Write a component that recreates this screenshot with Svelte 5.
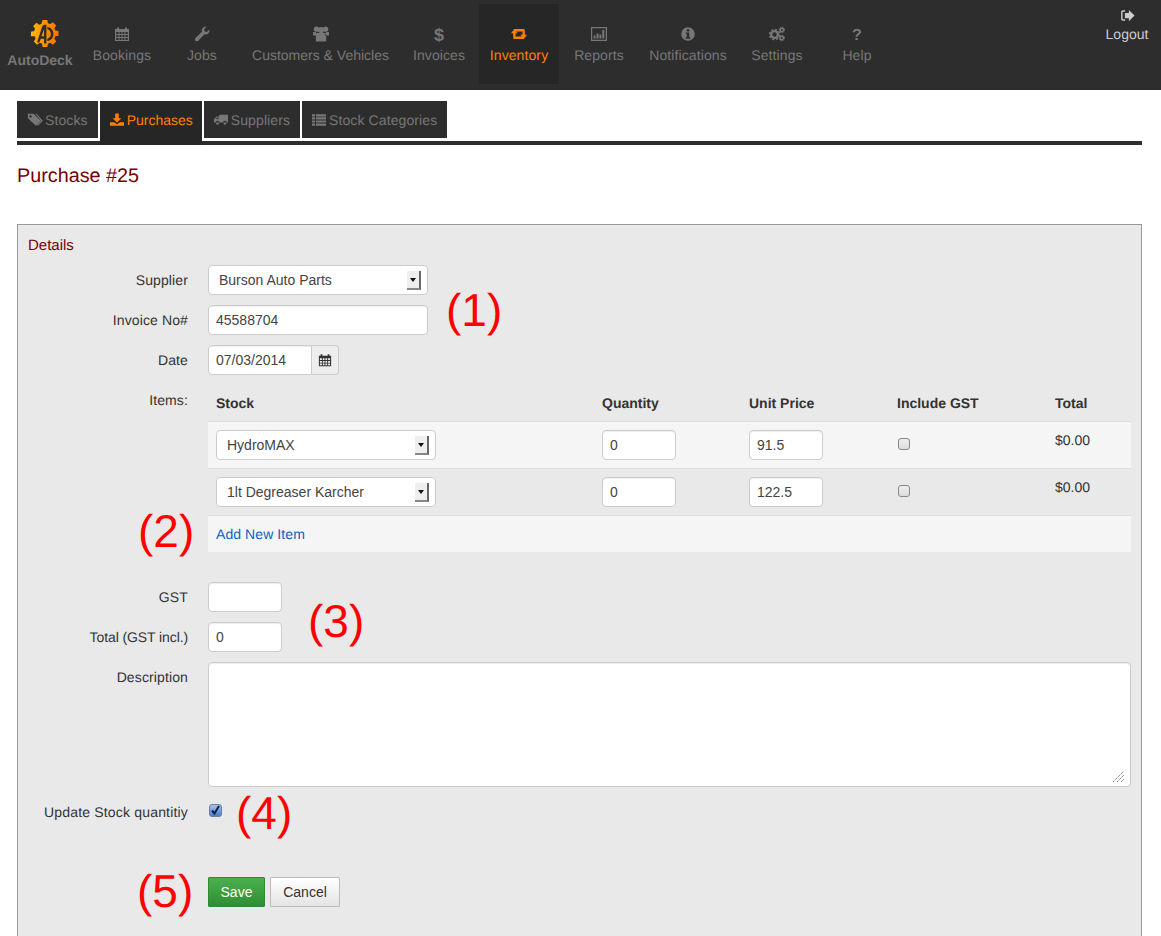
<script>
	const nav = [
		{ label: 'Bookings', icon: 'calendar' },
		{ label: 'Jobs', icon: 'wrench' },
		{ label: 'Customers & Vehicles', icon: 'users' },
		{ label: 'Invoices', icon: 'dollar' },
		{ label: 'Inventory', icon: 'retweet', active: true },
		{ label: 'Reports', icon: 'chart' },
		{ label: 'Notifications', icon: 'info' },
		{ label: 'Settings', icon: 'cogs' },
		{ label: 'Help', icon: 'question' }
	];

	const tabs = [
		{ label: 'Stocks', icon: 'tag' },
		{ label: 'Purchases', icon: 'download', active: true },
		{ label: 'Suppliers', icon: 'truck' },
		{ label: 'Stock Categories', icon: 'list' }
	];

	const items = [
		{ stock: 'HydroMAX', qty: '0', price: '91.5', total: '$0.00' },
		{ stock: '1lt Degreaser Karcher', qty: '0', price: '122.5', total: '$0.00' }
	];
</script>

{#snippet icon(name)}
	{#if name === 'calendar'}
		<svg viewBox="0 0 16 16" class="ico"><path fill-rule="evenodd" d="M1 3h2V1.500h2V3h6V1.500h2V3h2v12H1zM2.200 6v2h2.300V6zm3.300 0v2h2V6zm3 0v2h2V6zm3 0v2h2.300V6zM2.200 9v2h2.300V9zm3.300 0v2h2V9zm3 0v2h2V9zm3 0v2h2.300V9zM2.200 12v2h2.300v-2zm3.300 0v2h2v-2zm3 0v2h2v-2zm3 0v2h2.300v-2z"/></svg>
	{:else if name === 'wrench'}
		<svg viewBox="0 0 16 16" class="ico"><path d="M15.400 3.600c.3 1.700-.2 3.200-1.400 4.100-1.100.8-2.400 1-3.600.6L4.300 14.700c-.8.800-2 .8-2.800 0-.8-.8-.8-2 0-2.800l6.400-6.100c-.4-1.200-.2-2.600.7-3.600C9.600 1 11.100.5 12.700.8L10.200 3.300l.5 2.100 2.100.5z"/></svg>
	{:else if name === 'users'}
		<svg viewBox="0 0 16 16" class="ico"><circle cx="3.400" cy="3.200" r="2.600"/><circle cx="12.600" cy="3.200" r="2.600"/><circle cx="8" cy="4" r="3.100"/><path d="M0 6h3l1 3.500H0zM16 6h-3l-1 3.500h4zM3.800 7h8.400l1 2V15.500H2.800V9z"/></svg>
	{:else if name === 'dollar'}
		<span class="glyph">$</span>
	{:else if name === 'retweet'}
		<svg viewBox="0 0 16 16" class="ico"><path d="M0 7.200 3.300 3l3.300 4.200H4.500v3.400H11l2 2.400H3.400a1.200 1.200 0 0 1-1.200-1.200V7.200zM16 8.800 12.700 13 9.400 8.800h2.100V5.400H5L3 3h9.600a1.200 1.200 0 0 1 1.200 1.200v4.600z"/></svg>
	{:else if name === 'chart'}
		<svg viewBox="0 0 16 16" class="ico"><path fill-rule="evenodd" d="M0 1h16v14H0zM1.200 2.200v11.600h13.600V2.200zM2.600 9.500h2v3h-2zM5.500 7.500h2v5h-2zM8.400 8.500h2v4h-2zM11.300 4h2v8.500h-2z"/></svg>
	{:else if name === 'info'}
		<svg viewBox="0 0 16 16" class="ico"><path fill-rule="evenodd" d="M8 1.200a6.800 6.800 0 1 1 0 13.600A6.800 6.800 0 0 1 8 1.200zM6.800 3.200v2.200h2.400V3.200zM5.800 6.500v1.600h1v3H5.800v1.600h4.400v-1.600h-1V6.500z"/></svg>
	{:else if name === 'cogs'}
		<svg viewBox="0 0 16 16" class="ico"><circle cx="5.500" cy="8.500" r="3.400" fill="none" stroke="currentColor" stroke-width="2.400"/><circle cx="5.500" cy="8.500" r="5" fill="none" stroke="currentColor" stroke-width="1.600" stroke-dasharray="2 1.930"/><circle cx="12.800" cy="4" r="1.700" fill="none" stroke="currentColor" stroke-width="1.500"/><circle cx="12.800" cy="12" r="1.700" fill="none" stroke="currentColor" stroke-width="1.500"/><circle cx="12.800" cy="4" r="2.800" fill="none" stroke="currentColor" stroke-width="1" stroke-dasharray="1.300 .9"/><circle cx="12.800" cy="12" r="2.800" fill="none" stroke="currentColor" stroke-width="1" stroke-dasharray="1.300 .9"/></svg>
	{:else if name === 'question'}
		<span class="glyph q">?</span>
	{:else if name === 'signout'}
		<svg viewBox="0 0 16 16" class="ico"><path d="M5.500 2.500H3C2 2.500 1.200 3.300 1.200 4.300v7.400c0 1 .8 1.800 1.800 1.800h2.500V12H3.400c-.4 0-.7-.3-.7-.7V4.700c0-.4.3-.7.7-.7h2.100z"/><path d="M9.500 2 15.500 8l-6 6V10.800H5.200V5.200h4.300z"/></svg>
	{:else if name === 'tag'}
		<svg viewBox="0 0 18 16" class="ico tab-ico tag-ico"><path fill-rule="evenodd" d="M1 1.500h6.500l8 8-5.500 5.500-9-8.500zM4 3.300a1.300 1.300 0 1 0 0 2.600 1.300 1.300 0 0 0 0-2.600z"/><path d="M9.500 1.500h1.300l7 8-5.500 5.500-1-1 4.500-4.500z"/></svg>
	{:else if name === 'download'}
		<svg viewBox="0 0 16 16" class="ico tab-ico"><path d="M6 1h4v5.500h3L8 11.500 3 6.500h3z"/><path d="M0 11h4.500L8 13.500 11.500 11H16v4H0z"/></svg>
	{:else if name === 'truck'}
		<svg viewBox="0 0 16 16" class="ico tab-ico"><path fill-rule="evenodd" d="M6 2.500h10v9h-1.500a2 2 0 0 0-4 0H6a2 2 0 0 0-4 0H0V7.500L3 4.500h3zM2 7.300 3.600 5.700H5v1.600z"/><circle cx="4" cy="12.500" r="1.500"/><circle cx="12.500" cy="12.500" r="1.500"/></svg>
	{:else if name === 'list'}
		<svg viewBox="0 0 16 16" class="ico tab-ico"><path d="M0 2h3.500v2.500H0zM4.500 2H16v2.500H4.500zM0 5.500h3.500V8H0zM4.500 5.500H16V8H4.500zM0 9h3.500v2.500H0zM4.500 9H16v2.500H4.500zM0 12.500h3.500V15H0zM4.500 12.500H16V15H4.500z"/></svg>
	{/if}
{/snippet}

{#snippet pick(value)}
	<span class="select">
		<select><option>{value}</option></select>
		<span class="select-btn"><i></i></span>
	</span>
{/snippet}

<div class="page">
	<header class="navbar">
		<div class="brand">
			<svg viewBox="0 0 32 32" width="30" height="30">
				<defs>
					<linearGradient id="logo" x1="0" y1="0" x2="1" y2="0">
						<stop offset="0" stop-color="#ffb800" />
						<stop offset=".5" stop-color="#ff9000" />
						<stop offset="1" stop-color="#f87400" />
					</linearGradient>
				</defs>
				<path fill="url(#logo)" fill-rule="evenodd" d="M13.500 1h5l.6 3.400 2.500 1 2.900-2 3.500 3.500-2 2.900 1 2.500 3.400.6v5l-3.400.6-1 2.500 2 2.900-3.500 3.500-2.900-2-2.500 1-.6 3.400h-5l-.6-3.400-2.500-1-2.900 2-3.500-3.500 2-2.900-1-2.500L1 18.500v-5l3.400-.6 1-2.500-2-2.900 3.500-3.500 2.900 2 2.500-1z" />
				<path fill="#2d2d2d" fill-rule="evenodd" d="M15 6h2.500v20H15v-5h-3.500L10 25H7.500L13 8zM15 11l-2.800 7.500H15zM18.500 8.500c4 .5 6.500 3.500 6.500 7.500s-2.500 7-6.500 7.500V21c2.300-.5 3.800-2.500 3.800-5s-1.500-4.500-3.800-5z" />
			</svg>
			<span>AutoDeck</span>
		</div>
		<nav class="nav">
			{#each nav as item}
				<a class="nav-item" class:active={item.active} href="#top">
					<span class="nav-icon">{@render icon(item.icon)}</span>
					{item.label}
				</a>
			{/each}
		</nav>
		<a class="logout" href="#top">
			<span class="nav-icon">{@render icon('signout')}</span>
			Logout
		</a>
	</header>

	<main class="content">
		<div class="tabs">
			{#each tabs as tab}
				<a class="tab" class:active={tab.active} href="#top">{@render icon(tab.icon)}{tab.label}</a>
			{/each}
		</div>

		<h1 class="title">Purchase #25</h1>

		<section class="panel">
			<h2 class="panel-title">Details</h2>

			<div class="row">
				<span class="label">Supplier</span>
				{@render pick('Burson Auto Parts')}
			</div>
			<div class="row">
				<span class="label">Invoice No#</span>
				<input class="input wide" value="45588704" />
			</div>
			<div class="row">
				<span class="label">Date</span>
				<span class="date">
					<input class="input date-input" value="07/03/2014" />
					<span class="date-btn">
						<svg viewBox="0 0 16 16" width="14" height="14"><path fill-rule="evenodd" d="M1 3h2V1.500h2V3h6V1.500h2V3h2v12H1zM2.200 6v2h2.300V6zm3.300 0v2h2V6zm3 0v2h2V6zm3 0v2h2.300V6zM2.200 9v2h2.300V9zm3.300 0v2h2V9zm3 0v2h2V9zm3 0v2h2.300V9zM2.200 12v2h2.300v-2zm3.300 0v2h2v-2zm3 0v2h2v-2zm3 0v2h2.300v-2z" /></svg>
					</span>
				</span>
			</div>

			<div class="row items-row">
				<span class="label items-label">Items:</span>
				<div class="items">
					<div class="grid head">
						<span>Stock</span>
						<span>Quantity</span>
						<span>Unit Price</span>
						<span>Include GST</span>
						<span>Total</span>
					</div>
					{#each items as item, i}
						<div class="grid line" class:odd={i % 2 === 0}>
							<span>{@render pick(item.stock)}</span>
							<span><input class="input small" value={item.qty} /></span>
							<span><input class="input small" value={item.price} /></span>
							<span><input class="check" type="checkbox" /></span>
							<span class="total">{item.total}</span>
						</div>
					{/each}
					<div class="add-row"><a href="#top">Add New Item</a></div>
				</div>
			</div>

			<div class="row gst">
				<span class="label">GST</span>
				<input class="input small" value="" />
			</div>
			<div class="row">
				<span class="label tight">Total (GST incl.)</span>
				<input class="input small" value="0" />
			</div>
			<div class="row">
				<span class="label desc-label">Description</span>
				<span class="desc-wrap">
					<textarea class="input desc"></textarea>
					<svg class="grip" viewBox="0 0 11 11" width="11" height="11">
						<path d="M0 11 11 0M4 11l7-7M8 11l3-3" stroke="#777" stroke-width="1" stroke-dasharray="1.500 .7" fill="none" />
					</svg>
				</span>
			</div>
			<div class="row update">
				<span class="label">Update Stock quantitiy</span>
				<span class="checked">
					<svg viewBox="0 0 13 13" width="13" height="13">
						<defs>
							<linearGradient id="tick" x1="0" y1="0" x2="0" y2="1">
								<stop offset="0" stop-color="#a9c6f0" />
								<stop offset="1" stop-color="#4579cf" />
							</linearGradient>
						</defs>
						<rect x=".5" y=".5" width="12" height="12" rx="2.500" fill="url(#tick)" stroke="#6f7f9f" />
						<path d="M3 6.500 5.500 9.500 10 2" fill="none" stroke="#10203a" stroke-width="2" />
					</svg>
				</span>
			</div>
			<div class="row actions">
				<span class="label"></span>
				<button class="btn save">Save</button>
				<button class="btn cancel">Cancel</button>
			</div>

			<span class="note n1">(1)</span>
			<span class="note n2">(2)</span>
			<span class="note n3">(3)</span>
			<span class="note n4">(4)</span>
			<span class="note n5">(5)</span>
		</section>
	</main>
</div>

<style>
	:global(body) {
		margin: 0;
		background: #fff;
		font-family: 'Liberation Sans', Arial, sans-serif;
		font-size: 14px;
		color: #333;
		text-rendering: geometricPrecision;
	}

	.page {
		height: 936px;
		overflow: hidden;
	}

	.navbar {
		display: flex;
		height: 90px;
		background: #2d2d2d;
	}

	.brand {
		width: 82px;
		flex-shrink: 0;
		display: flex;
		flex-direction: column;
		align-items: center;
		padding-top: 19px;
		box-sizing: border-box;
		font-weight: bold;
		font-size: 14px;
		color: #777;
		padding-right: 2px;
	}

	.brand svg {
		margin-left: 10px;
	}

	.brand span {
		margin-top: 1px;
		line-height: 20px;
	}

	.nav {
		display: flex;
		height: 80px;
		margin-top: 4px;
	}

	.nav-item {
		display: flex;
		flex-direction: column;
		align-items: center;
		min-width: 80px;
		padding: 22px 9px 0;
		box-sizing: border-box;
		color: #777;
		text-decoration: none;
		line-height: 20px;
		letter-spacing: 0.1px;
	}

	.nav-item:nth-child(3) {
		width: 157px;
		letter-spacing: 0;
	}

	.nav-item:nth-child(7) {
		min-width: 98px;
	}

	.nav-item.active {
		background: #262626;
		color: #ff8000;
	}

	.nav-icon {
		display: flex;
		justify-content: center;
		align-items: center;
		height: 16px;
		margin-bottom: 3px;
	}

	.ico {
		width: 16px;
		height: 16px;
		fill: currentColor;
	}

	.glyph {
		padding-top: 2px;
		font-weight: bold;
		font-size: 18px;
		line-height: 16px;
	}

	.glyph.q {
		padding-top: 4px;
		font-size: 16px;
	}

	.logout {
		margin-left: auto;
		display: flex;
		flex-direction: column;
		align-items: center;
		width: 68px;
		padding-top: 7px;
		color: #ccc;
		text-decoration: none;
		line-height: 20px;
	}

	.logout .nav-icon {
		height: 16px;
		margin-bottom: 1px;
	}

	.logout .ico {
		width: 15px;
		height: 15px;
	}

	.content {
		padding: 11px 19px 0 17px;
	}

	.tabs {
		display: flex;
		gap: 2px;
		height: 40px;
		border-bottom: 4px solid #2d2d2d;
	}

	.tab {
		display: flex;
		align-items: center;
		gap: 3px;
		height: 37px;
		padding: 0 10px;
		background: #2d2d2d;
		color: #777;
		text-decoration: none;
		letter-spacing: 0.1px;
	}

	.tab.active {
		height: 44px;
		align-items: flex-start;
		padding: 11px 9px 0 10px;
		box-sizing: border-box;
		background: #262626;
		color: #ff8000;
		letter-spacing: 0;
	}

	.tab-ico {
		width: 14px;
		height: 15px;
		flex-shrink: 0;
	}

	.tag-ico {
		width: 16px;
		margin-right: -1px;
	}

	.title {
		margin: 20px 0 37px;
		font-size: 19.8px;
		line-height: 22px;
		font-weight: normal;
		color: #700;
	}

	.panel {
		position: relative;
		box-sizing: border-box;
		height: 760px;
		padding: 11px 10px 0;
		border: 1px solid #999;
		background: #e9e9e9;
	}

	.panel-title {
		margin: 0 0 9px;
		font-size: 15px;
		line-height: 20px;
		font-weight: normal;
		color: #700;
	}

	.row {
		display: flex;
		align-items: center;
		gap: 20px;
		margin-bottom: 10px;
	}

	.label {
		width: 160px;
		flex-shrink: 0;
		text-align: right;
		letter-spacing: 0.12px;
	}

	.label.tight {
		letter-spacing: -0.1px;
	}

	.input {
		box-sizing: border-box;
		height: 30px;
		padding: 0 7px;
		border: 1px solid #ccc;
		border-radius: 4px;
		background: #fff;
		font: inherit;
		color: #444;
		box-shadow: inset 0 1px 1px rgba(0, 0, 0, 0.075);
	}

	.wide {
		width: 220px;
	}

	.small {
		width: 74px;
	}

	.select {
		position: relative;
		display: inline-block;
		width: 220px;
		height: 30px;
	}

	.select select {
		appearance: none;
		display: block;
		width: 100%;
		height: 30px;
		padding: 0 10px;
		border: 1px solid #ccc;
		border-radius: 4px;
		background: #fff;
		font: inherit;
		color: #444;
	}

	.select-btn {
		position: absolute;
		top: 6px;
		right: 7px;
		width: 14px;
		height: 19px;
		box-sizing: border-box;
		display: flex;
		align-items: center;
		justify-content: center;
		background: #eee;
		border-right: 2px solid #666;
		border-bottom: 2px solid #888;
	}

	.select-btn i {
		width: 0;
		height: 0;
		border: 3px solid transparent;
		border-top: 4px solid #111;
		border-bottom: 0;
	}

	.date {
		display: flex;
	}

	.date-input {
		width: 104px;
		border-radius: 4px 0 0 4px;
	}

	.date-btn {
		box-sizing: border-box;
		width: 27px;
		height: 30px;
		display: flex;
		align-items: center;
		justify-content: center;
		border: 1px solid #ccc;
		border-left: 0;
		border-radius: 0 4px 4px 0;
		background: #eee;
		color: #333;
	}

	.date-btn svg {
		fill: currentColor;
	}

	.items-row {
		align-items: flex-start;
		margin-bottom: 30px;
	}

	.items-label {
		padding-top: 7px;
	}

	.items {
		flex: 1;
	}

	.grid {
		display: grid;
		grid-template-columns: 386px 147px 148px 158px 84px;
	}

	.grid > span {
		padding: 0 8px;
	}

	.head {
		height: 36px;
		font-weight: bold;
		align-items: center;
	}

	.line {
		box-sizing: border-box;
		height: 47px;
		padding-top: 8px;
		border-top: 1px solid #ddd;
	}

	.line.odd {
		background: #f5f5f5;
	}

	.check {
		appearance: none;
		box-sizing: border-box;
		display: block;
		width: 12px;
		height: 12px;
		margin: 8px 1px 0;
		border: 1px solid #888;
		border-radius: 3px;
		background: linear-gradient(#eee, #ddd);
	}

	.total {
		padding-top: 2px !important;
		color: #333;
	}

	.add-row {
		box-sizing: border-box;
		height: 37px;
		padding: 0 8px;
		border-top: 1px solid #ddd;
		background: #f5f5f5;
		display: flex;
		align-items: center;
	}

	.add-row a {
		color: #0a62c4;
		text-decoration: none;
		letter-spacing: 0.08px;
	}

	.desc-wrap {
		position: relative;
		flex: 1;
		height: 125px;
	}

	.desc {
		width: 100%;
		height: 125px;
		margin: 0;
		display: block;
		resize: none;
	}

	.grip {
		position: absolute;
		right: 7px;
		bottom: 5px;
	}

	.desc-label {
		align-self: flex-start;
		padding-top: 7px;
	}

	.update {
		align-items: flex-start;
		margin-top: 17px;
		height: 57px;
		margin-bottom: 16px;
	}

	.update .label {
		line-height: 16px;
		letter-spacing: 0.18px;
	}

	.checked {
		display: block;
		margin-left: 1px;
		height: 13px;
	}

	.checked svg {
		display: block;
	}

	.actions {
		gap: 0;
	}

	.actions .label {
		margin-right: 20px;
	}

	.btn {
		box-sizing: border-box;
		height: 30px;
		padding: 0;
		border-radius: 1px;
		font: inherit;
	}

	.save {
		width: 57px;
		margin-right: 5px;
		border: 1px solid #2f8a33;
		background: linear-gradient(#4cb04f, #2e8e33);
		color: #fff;
	}

	.cancel {
		width: 70px;
		border: 1px solid #bbb;
		background: linear-gradient(#fff, #e4e4e4);
		color: #333;
	}

	.note {
		position: absolute;
		font-size: 46px;
		line-height: 56px;
		color: #f00;
	}

	.n1 { left: 428px; top: 57px; }
	.n2 { left: 120px; top: 278px; }
	.n3 { left: 290px; top: 368px; }
	.n4 { left: 218px; top: 560px; }
	.n5 { left: 119px; top: 638px; }
</style>
